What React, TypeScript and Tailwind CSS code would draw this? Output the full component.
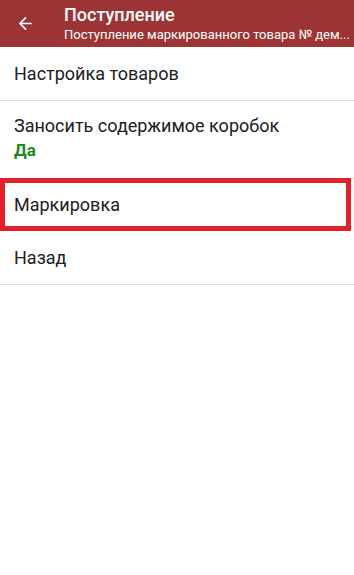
import { ArrowLeft } from 'lucide-react';

export default function App() {
  return (
    <div className="w-[354px] h-[575px] bg-white overflow-hidden" style={{ fontFamily: 'Roboto, "Noto Sans", sans-serif' }}>
      {/* Toolbar */}
      <div className="h-[47px] bg-[#9c3435] flex items-center text-white">
        <div className="w-[64px] shrink-0 flex items-center pl-[16px]">
          <ArrowLeft className="w-[19px] h-[19px]" strokeWidth={2.2} />
        </div>
        <div className="flex flex-col min-w-0">
          <div className="text-[18px] leading-[22px] font-medium">Поступление</div>
          <div className="text-[13px] leading-[17px] whitespace-nowrap">Поступление маркированного товара № дем...</div>
        </div>
      </div>

      {/* Menu */}
      <div className="text-[#202020]">
        <div className="h-[54px] flex items-center px-[14px] text-[18px] border-b border-[#e0e0e0]">
          Настройка товаров
        </div>
        <div className="h-[78px] flex flex-col pt-[13px] px-[14px] border-b border-[#e0e0e0]">
          <div className="text-[18px] leading-[24px]">Заносить содержимое коробок</div>
          <div className="text-[17px] leading-[24px] font-bold text-[#1a8a1a]">Да</div>
        </div>
        <div className="h-[53px] flex items-center px-[9px] text-[18px] border-[5px] border-[#e3202a] mr-[3px] -mt-px">
          Маркировка
        </div>
        <div className="h-[54px] flex items-center px-[14px] text-[18px] border-b border-[#e0e0e0]">
          Назад
        </div>
      </div>
    </div>
  );
}
